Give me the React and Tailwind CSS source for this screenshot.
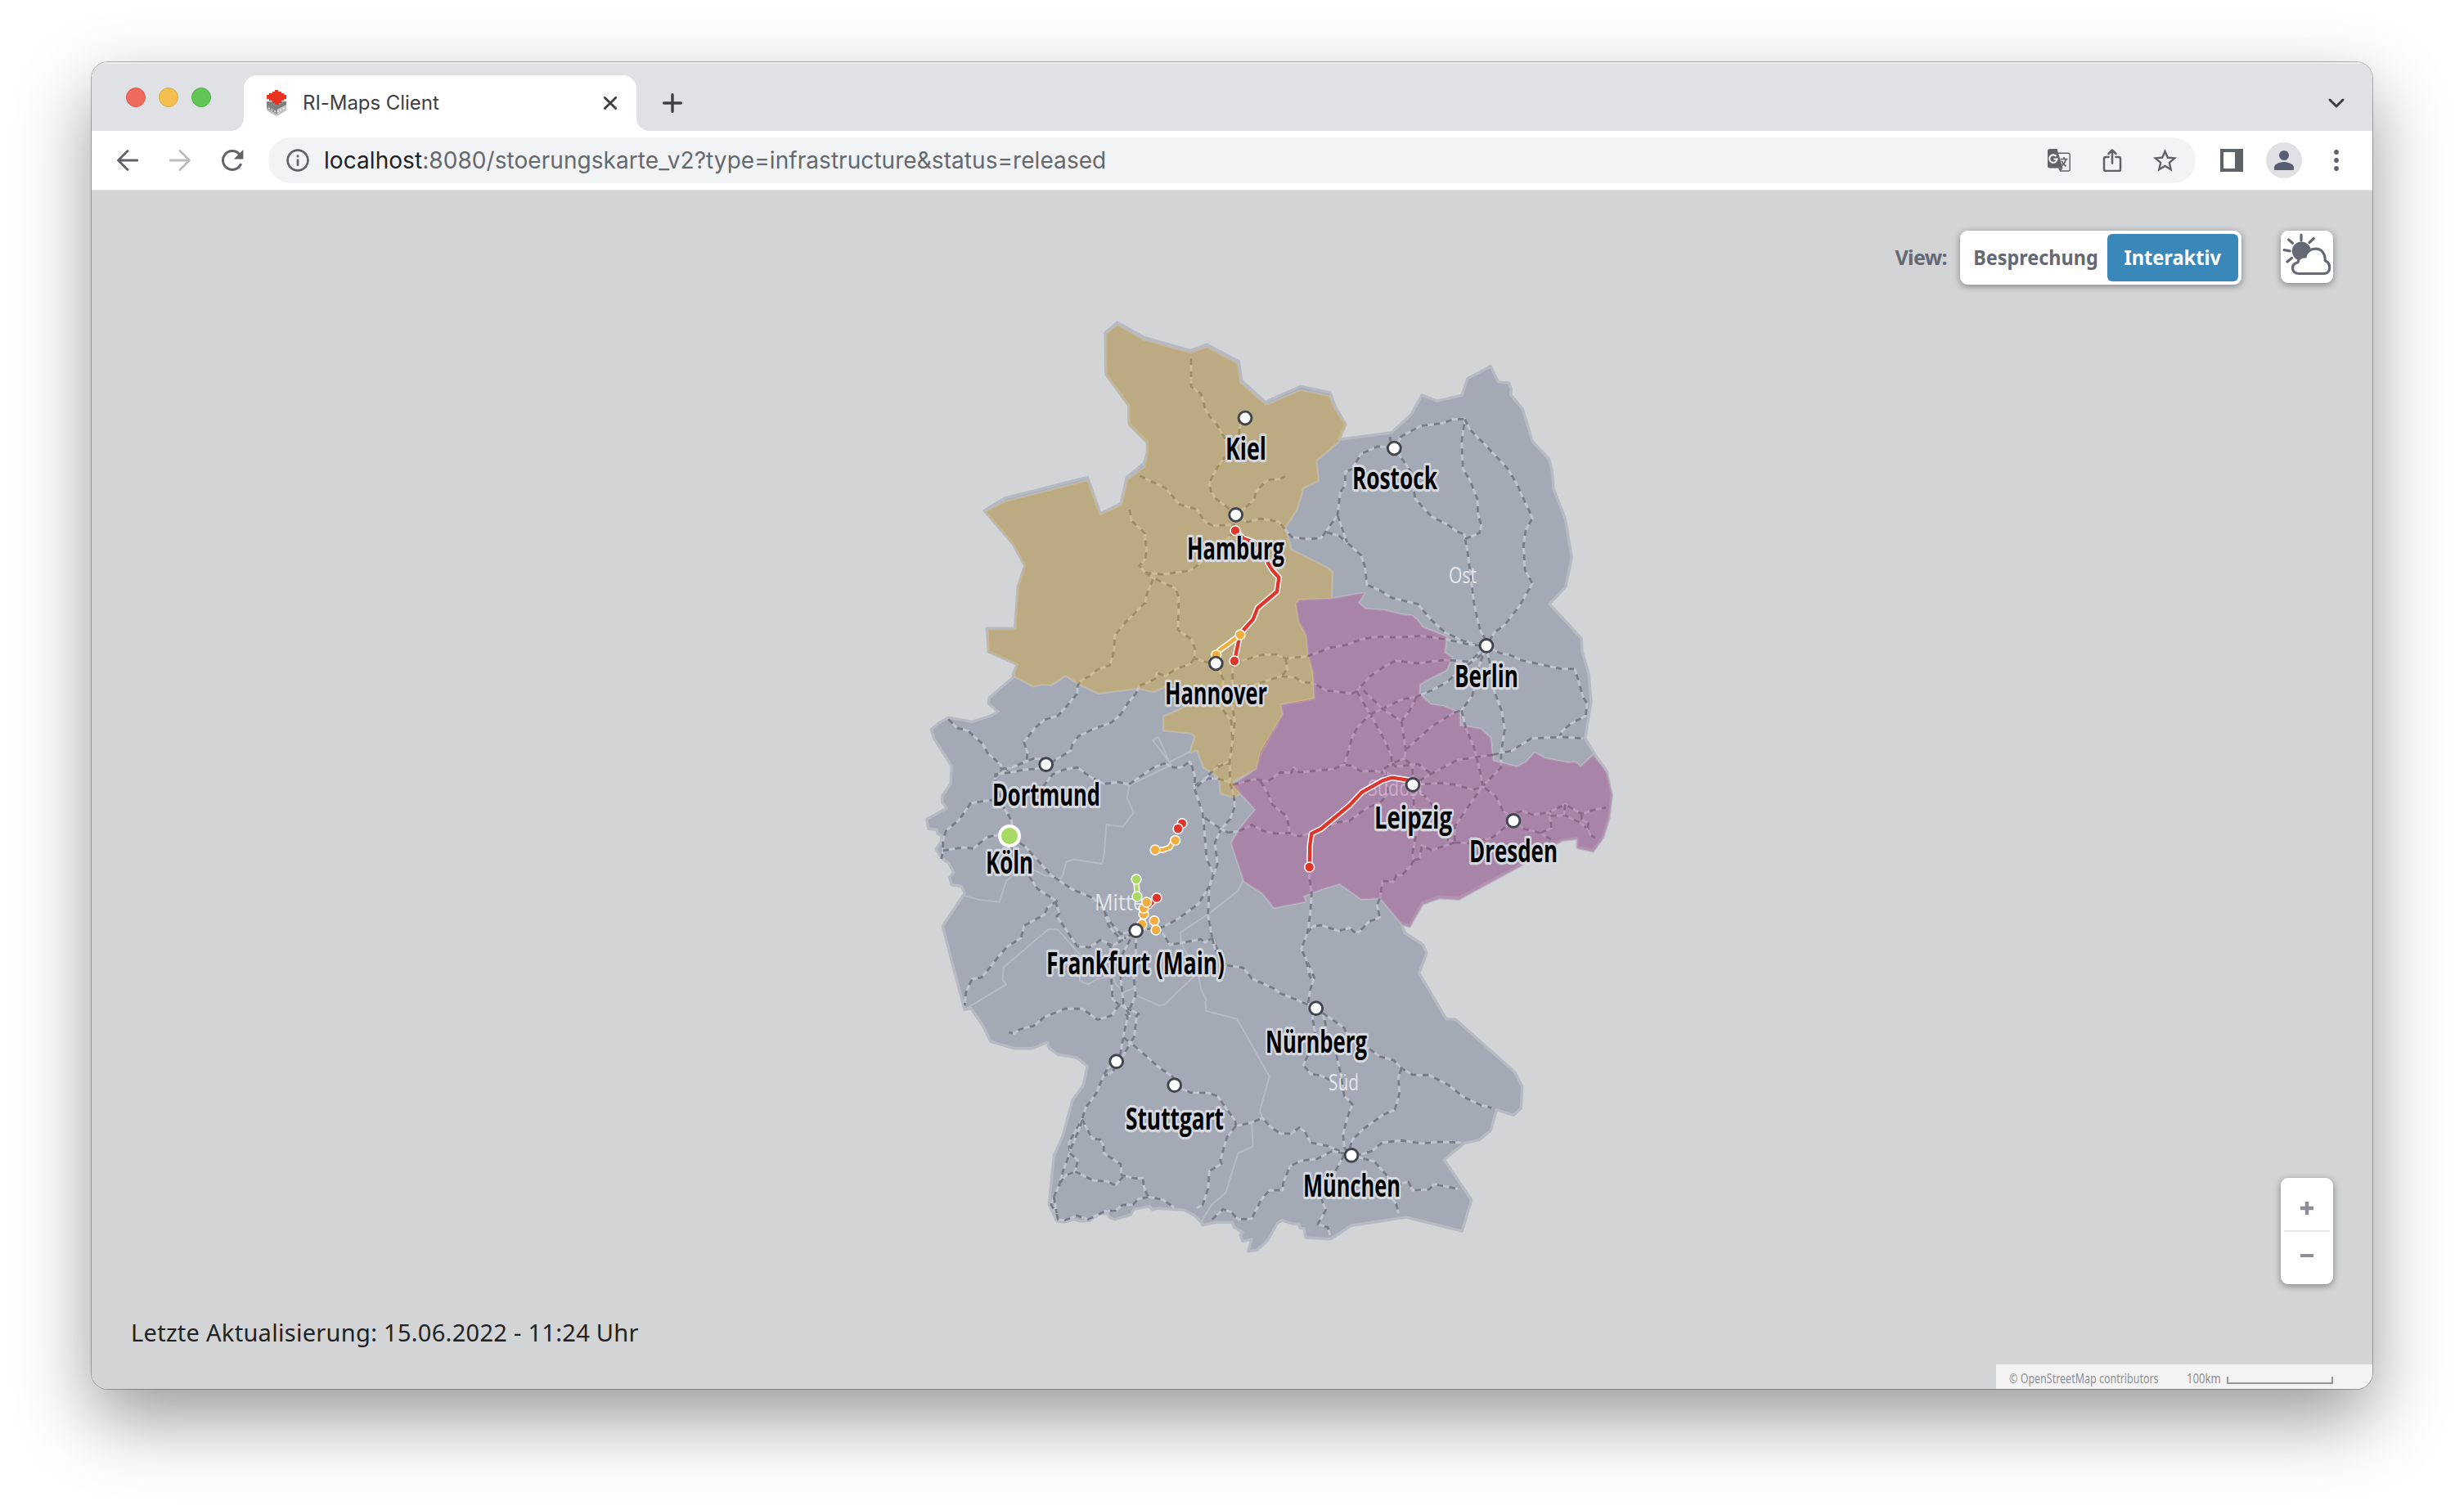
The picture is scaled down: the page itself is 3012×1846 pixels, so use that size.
const TILES = {
  A: [1120, 380],
  B: [1550, 430],
  C: [1120, 820],
  D: [1500, 850],
  E: [1140, 1200],
  F: [1500, 1200],
};

// Geometry is stored per map tile, three units to a pixel: "A 10,20 30,40 B 50,60".
function project(spec) {
  let tile = TILES.A;
  const points = [];
  for (const token of spec.trim().split(/\s+/)) {
    if (TILES[token]) {
      tile = TILES[token];
    } else {
      const [x, y] = token.split(",").map(Number);
      points.push([tile[0] + x / 3, tile[1] + y / 3]);
    }
  }
  return points;
}

const toPoints = (spec) =>
  project(spec)
    .map(([x, y]) => `${x.toFixed(1)},${y.toFixed(1)}`)
    .join(" ");

const GERMANY = `A 737,43 835,97 1006,146 1065,123 1183,185 1193,256 1283,337
B 0,180 120,127 228,150 249,206 284,265 260,322 452,297 524,232 565,158 618,181 711,160 732,98 817,53 844,111 883,114 892,135 890,158 934,210 970,330 1030,393 1042,437 1047,503 1090,612 1114,755 1091,862 1032,925 1150,1052 1152,1100 1176,1180 1185,1284 1163,1417
D 1346,213 1393,280 1410,365 1400,450 1378,520 1341,569 1284,556 1284,525 1230,530 1190,552 1080,620 850,743 780,738 716,760 668,845 641,838 650,870 718,915 732,945 704,1019 803,1187 838,1189
F 1056,333 1082,385 1078,464 1051,490 988,470 967,545 926,580 870,593 796,653 896,801 862,915 657,864 455,895 380,944 288,939 282,905 266,903 264,889 237,888 201,875 185,885 150,947 110,985 77,989 90,945 57,953 48,930 57,920 25,900 19,883
E 1040,883 990,893 985,882 960,857 922,838 830,832 803,836 797,823 738,835 727,855 668,872 650,865 640,850 610,853 575,877 540,879 520,872 480,882 455,878 427,817 445,640 478,565 513,435 553,380 567,310 527,278 460,268 428,245 421,222 366,245 300,245 213,220 185,163 140,97 117,103
C 97,937 178,815 165,790 130,785 122,758 138,740 120,707 92,685 72,655 92,625 92,605 78,597 75,583 45,580 38,545 112,504 95,482 95,460 126,415 130,350 65,248 55,215 85,190 120,172 205,187 275,165 300,150 265,120 268,98 357,23
A 355,1333 370,1297 265,1250 259,1165 362,1165 373,1010 398,935 355,855 250,733 325,687 628,610 675,743 750,707 772,610 835,560 847,520 847,480 780,412 780,348 695,232 693,80`;

const NORD = `A 737,50 835,106 1006,154 1065,132 1178,192 1188,262 1281,343
B 0,192 120,140 224,162 245,210 286,267 258,332 177,400 186,473 130,500 107,578 63,645 85,725 215,790 237,808 233,905 115,910 103,925 113,990 140,1040 147,1110 165,1175 170,1272 130,1284 50,1292 53,1332 5,1420
C 1265,303 1248,360 1163,405 1190,450 1165,465 1115,450 1112,405 1095,380 1053,355 1030,292 1003,300 1022,243 1010,230 907,220 907,168 985,132 960,50 925,55 870,78 815,65 668,83 600,52 548,18 495,53 460,50 430,58 357,20
A 370,1297 265,1250 262,1167 362,1167 373,1010 398,935 355,855 252,737 325,699 628,622 675,747 752,712 775,618 838,572 847,520 847,485 780,418 780,350 697,235 697,84`;

const SUEDOST = `B 115,910 233,905 325,888 355,885 333,920 357,942 430,948 488,963 528,967 548,983 568,1010 655,1045 648,1103 675,1120 655,1168 590,1200 557,1220 555,1255 597,1293 645,1300 703,1325 705,1370 780,1383 810,1410
D 967,157 975,240 1063,262 1095,245 1128,210 1165,230 1250,247 1280,245 1296,262 1343,218 1393,284 1412,365 1402,450 1380,522 1343,574 1284,561 1284,527 1230,533 1190,556 1080,624 850,749 780,745 718,766 670,850 641,840 562,745 492,748 413,692 350,710 280,737 290,757 172,780 130,727 62,683 15,542 45,490 103,420 20,328 108,270 123,205 205,70 197,35 320,12
B 165,1175 147,1110 140,1040 113,990 103,925`;

const BORDERS = [
  "C 178,825 230,840 305,848 330,770 365,745 430,730 470,750 530,763 540,745 550,700 580,692 682,708 690,665 697,565 758,572 797,520 773,465 782,420 935,345 868,255 888,243 928,335 1003,297",
  "C 177,1243 330,1150 317,1135 320,1088 485,947 520,950 600,1040 600,1138 630,1150 665,1130 720,1120 733,1150 760,1180 805,1162",
  "C 805,1190 890,1227 910,1225 1030,1110",
  "C 1198,770 1180,808 1070,893 968,960 972,1000 1035,1115 1045,1170 1065,1210 1060,1215 1063,1248 1178,1277 E 1117,137 1235,348 1200,475 1210,500",
  "E 1170,515 1175,605 1120,630 1075,775 1022,820 985,882",
];

const RAILS = [
  "A 1012,180 1008,180 1008,278 1045,305 1060,360 1085,400 1098,410 1130,465 1150,520 1125,545 1100,580 1075,630 1080,660 1100,690 1172,745",
  "A 1206,393 1188,420 1183,455 1150,520",
  "A 820,605 915,650 965,710 1030,728 1055,770 1085,787 1170,785",
  "A 782,728 790,770 838,815 845,880 840,910 818,935 840,960 870,980 950,1018 963,1050 960,1170 1010,1205 1022,1240 1020,1275 1070,1290 1099,1293",
  "A 840,960 900,967 1005,953 1060,910 1110,860 1150,830 1172,790",
  "A 868,985 845,1040 840,1070 770,1140 728,1190 725,1250 710,1300 665,1315 635,1340 605,1355 592,1375 590,1405 560,1440 C 520,165 470,180 435,210 395,262 408,300 405,330 345,357",
  "A 1020,1275 1005,1295 950,1315 912,1340 883,1327 875,1350 845,1365 818,1375 805,1405 775,1440 C 750,160 715,190 640,218 595,240 573,270 565,295 505,330 476,344",
  "A 1172,748 1215,775 1260,762 1330,773 B 65,655 88,680 150,687 195,683 255,600 265,515 283,490 283,440 310,430 340,375 403,347 463,354",
  "A 1172,748 1215,715 1240,690 1245,665 1275,632 B 0,470 45,467 63,457",
  "B 215,662 260,675 290,700 340,745 355,785 363,855 410,875 455,903 548,925 600,985 650,1030 720,1062 775,1078 801,1078",
  "B 255,600 290,700",
  "B 463,354 500,405 525,440 540,540 600,605 660,635 690,658 720,670 733,740 748,860 755,920 770,990 780,1025 801,1060",
  "B 447,312 450,330",
  "B 463,354 490,310 560,272 640,262 680,248 722,247 710,330 715,430 740,470 768,540 770,595 783,640 775,665 722,687",
  "B 722,247 740,285 800,345 880,430 910,480 970,610 945,655 937,710 942,800 970,850 920,935 870,1000 830,1030 801,1078",
  "B 801,1078 850,1105 890,1113 930,1132 1075,1163 1125,1163 1135,1195 1155,1265 1170,1290 1165,1335 1110,1365 1080,1390 1070,1410",
  "D 975,218 1045,203 1115,158 1230,153 1305,158",
  "A 1170,1290 1265,1262 1315,1260 B 25,1110 65,1125 145,1117 230,1085 290,1075 340,1055 400,1045 470,1048 560,1042 655,1055 720,1070 775,1078",
  "B 65,1125 70,1165 50,1190 0,1205 A 1240,1372 1165,1378",
  "B 50,1190 100,1195 125,1212 165,1215 215,1243 310,1253 325,1245 375,1190 425,1155 468,1133 545,1143 650,1130 740,1137 801,1078",
  "B 325,1245 375,1330 D 570,150 600,215 605,250",
  "B 350,1242 420,1310 490,1355 D 650,170 655,200 650,235",
  "B 785,1110 730,1150 650,1215 600,1242 545,1265 490,1275 430,1305 375,1330 330,1375 310,1410 D 440,220 430,255",
  "B 545,1265 520,1315 490,1355",
  "D 655,200 750,115 830,65 860,55 B 750,1260 775,1150 801,1078",
  "B 801,1078 820,1180 830,1245 858,1320 868,1385 D 1005,210 1005,265 935,335 890,400 835,480 835,535",
  "D 860,55 875,120 905,190 930,290 938,335",
  "D 975,218 845,237 745,290 681,328",
  "D 681,328 780,322 840,328 900,347 938,335 985,370 1010,420 1050,460",
  "D 20,328 100,308 150,315 195,283 235,285 245,265 265,283 390,270 430,255 455,258 490,278 545,278 600,290",
  "D 122,315 150,360 165,400 220,445 228,500",
  "D 0,503 40,500 90,475 140,500 180,507 228,505 265,517 320,500",
  "D 320,505 410,465 450,460 510,415 560,395 590,360 575,270 605,250 650,232 680,260 681,328",
  "D 605,250 620,262 700,252 745,285",
  "D 681,328 740,385 775,440 810,530 835,540 750,568 715,550 705,600 685,605 680,580 695,500 685,400 681,328",
  "D 685,605 670,630 640,660 620,660 610,685 570,680 562,740 550,770 560,815 520,830 485,868 465,868 450,852 410,865 345,843 315,848 295,870",
  "D 835,540 900,543 975,520 1050,460",
  "D 1050,460 1090,490 1150,505 1190,530",
  "D 1150,505 1190,487 1180,430 1240,400 1300,435 1345,420 1390,412",
  "D 1060,430 1085,425 1120,438 1180,430 1190,442 1240,440 1290,465 1325,490 1330,510 1350,523",
  "D 1240,400 1235,440",
  "D 1300,435 1300,455 1325,470 1320,495",
  "D 302,630 302,670 310,730 305,800 295,870 272,930 300,990 320,1035 305,1080 297,1130 326,1147",
  "D 290,975 305,1035 318,1045",
  "C 118,178 150,210 190,220 245,270 260,300 310,345 312,378",
  "C 290,385 345,357 430,322 476,325",
  "C 476,344 440,360 400,362 350,372 290,380 290,400",
  "C 310,360 350,357",
  "C 290,400 300,440 320,500 350,550 352,590",
  "C 290,475 275,475 200,485 155,550 110,585 98,620 98,660 92,690",
  "C 98,660 170,648 210,652 260,610 342,595",
  "C 342,606 400,645 450,700 495,750 570,800 650,835 690,880 710,920 750,965 806,953",
  "C 342,640 415,755 445,800 515,845 480,870 470,895 395,935 385,980 335,1010 300,1050 265,1095 240,1125 205,1130 182,1180 178,1228",
  "C 510,845 525,890 515,900 550,950 590,1010 635,1015 675,988 720,1008 770,980 806,953",
  "C 690,880 705,935 745,980 770,980",
  "C 465,425 500,380 540,363 590,355 640,390 690,415 740,408 780,417 870,355 910,340 945,355 970,355 1005,333 1022,385 1020,430 1050,520 1058,600 1065,690 1090,745 1075,790 1070,895 1085,980 1135,1080",
  "C 1022,420 1070,395 1095,395 1120,400 1155,410",
  "C 1030,425 1070,385 1110,345 1150,340",
  "C 1099,-27 1125,30 1125,70 1115,130 1155,185 1160,270 1150,330 1095,360 1060,395",
  "C 1160,-35 1160,130 1168,190 1150,330 1150,410 1165,455 1168,500 1150,545 1118,580 1095,630 1105,710 1075,790 1035,855 960,910 905,940 806,953",
  "C 1058,540 1110,575 1145,595",
  "C 880,951 905,965 930,1005 1015,990 1045,985 1060,997 1085,980 1110,1040",
  "C 1085,980 1095,1020 1135,1080",
  "D 0,990 60,1000 90,1038 170,1075 195,1093 250,1115 326,1147",
  "C 806,953 805,1040 795,1100 805,1190 785,1235 770,1260 E 715,130 700,200 690,260 674,293",
  "C 700,1000 712,1010 715,1120 720,1205 745,1225 815,1258 E 748,125 740,200 700,270 674,293",
  "C 785,985 750,1050 750,1130 760,1220 785,1270",
  "C 745,1225 715,1265 665,1280 610,1240 545,1240 470,1270 430,1303 E 350,167 320,175 300,190 280,187",
  "E 700,205 735,232 780,270 830,315 880,348 887,380 945,407 1010,408 1045,420 1080,470 1110,510 1112,530 1175,515 1210,500 F 155,530 195,557 235,558 265,535 285,550 305,590 370,603 410,620 456,637",
  "E 1112,530 1080,570 1055,655 1060,668 1015,695 1010,760 990,820 968,830",
  "E 674,293 640,320 625,350 600,410 560,465 548,505 500,590 503,630 480,690 465,745 440,800 435,820 455,850 460,873 485,875 530,858 570,872 630,843 670,840 695,820 735,818 755,797 793,790 845,800 885,828",
  "E 674,310 655,335 630,345",
  "E 445,790 455,850",
  "E 548,505 585,575 615,580 628,605 628,630 690,670 693,710 745,722 770,720 778,765 793,790",
  "E 503,630 533,655 523,697 490,710 465,740",
  "E 523,697 590,730 640,733 670,747 700,715",
  "E 548,510 530,560 503,620",
  "E 1025,873 1065,835 1095,845 1120,872 1170,870 1205,800 1235,765 1285,765 F 205,740 230,678 270,657 330,650 385,622 430,630",
  "F 326,98 313,130 322,185 297,270 280,305 305,338 345,345 400,372",
  "F 345,98 360,150 365,190 400,265 415,330 430,420 460,450 440,500 425,560 430,610 456,637",
  "F 350,115 430,170 450,215 520,245 560,275 610,288 640,318 680,342 740,343 810,378 865,422 930,453 970,463",
  "F 640,318 628,350 632,410 615,470 570,490 500,540 460,580 450,610",
  "F 470,640 530,622 570,590 640,583 715,594 770,588 860,590",
  "F 456,637 540,660 585,710 605,750 600,790 620,815 628,850",
  "F 620,750 640,740 665,735 680,765 740,763 760,743 845,760",
  "F 430,635 400,690 385,740 345,795 362,838 332,890 370,902 377,930",
];

const RED = "#e0352b";
const ORANGE = "#f3ad3e";
const GREEN = "#a6da62";

const INCIDENTS = [
  { color: RED, path: "A 1170,806 1200,835 1240,850 1280,890 1290,925 1305,950 1330,978 1323,1030 1252,1090 1235,1132 1188,1184 1167,1284", stops: "A 1170,806 1167,1284" },
  { color: ORANGE, path: "A 1188,1188 1150,1217 1112,1245 1100,1262", stops: "A 1100,1262 1188,1188" },
  { color: RED, path: "D 668,312 605,302 570,313 495,355 450,403 345,490 310,507 304,550 302,630", stops: "D 302,630" },
  { color: RED, path: "C 975,560 960,579", stops: "C 975,560 960,579" },
  { color: ORANGE, path: "C 876,657 905,657 930,648 940,630 950,622", stops: "C 876,657 950,622" },
  { color: GREEN, path: "C 807,765 810,828", stops: "C 807,765 810,828" },
  { color: RED, path: "C 882,833 850,868", stops: "C 882,833" },
  { color: ORANGE, path: "C 845,849 834,893 828,930 806,935", stops: "C 828,930 834,893 834,871 845,849" },
  { color: ORANGE, path: "C 873,917 879,951", stops: "C 873,917 879,951" },
];

const STATIONS = "A 1206,393 1172,748 1099,1293 B 463,354 801,1078 C 476,344 806,953 D 681,328 1050,460 F 326,98 456,637 E 674,293 887,380";

// name, left, right, baseline
const CITIES = [
  ["Kiel", 1498, 1548, 561.5],
  ["Hamburg", 1451, 1570, 683.5],
  ["Hannover", 1424, 1549, 861],
  ["Rostock", 1653, 1757, 598],
  ["Berlin", 1778, 1856, 840],
  ["Dortmund", 1213, 1345, 985],
  ["Köln", 1205, 1263, 1067.5],
  ["Frankfurt (Main)", 1279, 1497, 1190.5],
  ["Leipzig", 1680, 1775, 1013],
  ["Dresden", 1796, 1904, 1053.5],
  ["Nürnberg", 1547, 1671, 1286.5],
  ["Stuttgart", 1376, 1496, 1380.5],
  ["München", 1593, 1712, 1463],
];

const REGIONS = [
  ["Ost", 1771, 1805, 713, "#e3e6eb"],
  ["Mitte", 1338, 1399, 1113, "#e3e6eb"],
  ["Südost", 1672, 1741, 973, "#cfabcb"],
  ["Süd", 1624, 1661, 1333, "#e3e6eb"],
];

function GermanyMap() {
  return (
    <svg viewBox="1120 380 880 1180" className="block h-[1180px] w-[880px]" strokeLinejoin="round">
      <polygon points={toPoints(GERMANY)} fill="#a3aab5" stroke="#b6bac2" strokeWidth="3.4" />
      <g fill="none" stroke="#b6bac3" strokeWidth="2.6">
        <polygon points={toPoints(NORD)} />
        <polygon points={toPoints(SUEDOST)} />
        {BORDERS.map((b) => (
          <polyline key={b} points={toPoints(b)} strokeWidth="2" />
        ))}
      </g>
      <g fill="none" strokeWidth="2.9">
        {RAILS.map((r) => (
          <g key={r}>
            <polyline points={toPoints(r)} stroke="#bfc4d0" />
            <polyline points={toPoints(r)} stroke="#777c87" strokeDasharray="7.4 7.6" />
          </g>
        ))}
      </g>
      <polygon points={toPoints(NORD)} fill="#eaad23" fillOpacity="0.35" />
      <polygon points={toPoints(SUEDOST)} fill="#b14390" fillOpacity="0.35" />

      <g fontFamily="'Open Sans', 'Noto Sans', sans-serif" fontSize="28">
        {REGIONS.map(([name, x1, x2, y, fill]) => (
          <text key={name} x={x1} y={y} fill={fill} textLength={x2 - x1} lengthAdjust="spacingAndGlyphs">
            {name}
          </text>
        ))}
      </g>

      {INCIDENTS.map((i) => (
        <g key={i.path} fill="none">
          <polyline points={toPoints(i.path)} stroke="#fff" strokeWidth="7.4" />
          <polyline points={toPoints(i.path)} stroke={i.color} strokeWidth="4.4" />
        </g>
      ))}
      {INCIDENTS.map((i) =>
        project(i.stops).map(([x, y]) => (
          <circle key={`${x}-${y}`} cx={x} cy={y} r="5.9" fill={i.color} stroke="#fff" strokeWidth="1.5" />
        ))
      )}
      <circle cx="1234" cy="1022" r="12" fill={GREEN} stroke="#fff" strokeWidth="4" />
      {project(STATIONS).map(([x, y]) => (
        <circle key={`${x}-${y}`} cx={x} cy={y} r="7.9" fill="#fff" stroke="#3f444d" strokeWidth="2.9" />
      ))}

      <g fontFamily="'Open Sans', 'Noto Sans', sans-serif" fontSize="37" fontWeight="700">
        {CITIES.map(([name, x1, x2, y]) => (
          <text
            key={name}
            x={x1}
            y={y}
            textLength={x2 - x1}
            lengthAdjust="spacingAndGlyphs"
            fill="#000"
            stroke="#d6d9df"
            strokeWidth="6.5"
            paintOrder="stroke"
          >
            {name}
          </text>
        ))}
      </g>
    </svg>
  );
}

function Favicon() {
  return (
    <svg viewBox="0 0 24 32" className="h-8 w-6">
      <path d="M0 20l12 8 12-8v5l-12 7-12-7z" fill="#bdbdbd" />
      <path d="M0 14h24v8l-12 7L0 22z" fill="#8a8a8a" />
      <path d="M13 22l11-5v7l-11 6z" fill="#c4c4c4" />
      <path d="M2 22l10 5 10-5" fill="none" stroke="#fff" strokeWidth="1.2" strokeDasharray="2 2" />
      <path d="M0 14l12 6 12-6v4l-12 6-12-6z" fill="#7d7d7d" />
      <path d="M7 2h3V0h4v2h4v2h3v2h3v5h-3v2h-3v3h-3v2h-5v-2H7v-3H3v-2H0V6h3V4h4z" fill="#ea3323" />
    </svg>
  );
}

function TabStrip() {
  return (
    <div className="flex h-[84px] bg-[#dfe1e5] shadow-[inset_0_2px_0_#eceef1]">
      <div className="flex w-[186px] items-start gap-4 pl-[42px] pt-[31px]">
        <span className="size-6 rounded-full border border-[#dd594f] bg-[#ee6a5f]" />
        <span className="size-6 rounded-full border border-[#dea73e] bg-[#f5bf4f]" />
        <span className="size-6 rounded-full border border-[#52ad42] bg-[#61c554]" />
      </div>
      <div className="relative mt-4 flex h-[68px] w-[480px] items-center rounded-t-[16px] bg-white pl-7 pr-6">
        <svg viewBox="0 0 16 16" className="absolute -left-4 bottom-0 size-4" fill="#fff">
          <path d="M16 0v16H0A16 16 0 0 0 16 0z" />
        </svg>
        <svg viewBox="0 0 16 16" className="absolute -right-4 bottom-0 size-4" fill="#fff">
          <path d="M0 0v16h16A16 16 0 0 1 0 0z" />
        </svg>
        <Favicon />
        <span className="ml-5 flex-1 whitespace-nowrap font-['Inter',sans-serif] text-[24px] tracking-[-0.05px] text-[#3c4043]">
          RI-Maps Client
        </span>
        <svg viewBox="0 0 16 16" className="size-4" stroke="#3c4043" strokeWidth="2.8" strokeLinecap="round">
          <path d="M1.4 1.4l13.2 13.2M14.6 1.4L1.4 14.6" />
        </svg>
      </div>
      <svg viewBox="0 0 24 24" className="ml-8 mt-[38px] size-6" stroke="#3c4043" strokeWidth="3.4" strokeLinecap="round">
        <path d="M12 1.7v20.6M1.7 12h20.6" />
      </svg>
      <svg viewBox="0 0 20 12" className="ml-auto mr-[34px] mt-[44px] h-3 w-5" fill="none" stroke="#3c4043" strokeWidth="3" strokeLinecap="round" strokeLinejoin="round">
        <path d="M2 2l8 8 8-8" />
      </svg>
    </div>
  );
}

function Toolbar() {
  return (
    <div className="flex h-[74px] items-center border-b-2 border-[#d8dadd] bg-white font-['Inter',sans-serif]">
      <div className="flex w-[216px] items-center gap-[38px] pl-[31px]">
        <svg viewBox="0 0 26 26" className="size-[26px]" fill="none" stroke="#5f6368" strokeWidth="2.8" strokeLinecap="round" strokeLinejoin="round">
          <path d="M25 13H2M13 1.5L1.5 13 13 24.5" />
        </svg>
        <svg viewBox="0 0 26 26" className="size-[26px]" fill="none" stroke="#babcbe" strokeWidth="2.8" strokeLinecap="round" strokeLinejoin="round">
          <path d="M1 13h23M13 1.5L24.5 13 13 24.5" />
        </svg>
        <svg viewBox="0 0 28 26" className="-ml-px h-[26px] w-7" fill="none">
          <path d="M22.5 5.5A11.4 11.4 0 1 0 24.6 17" stroke="#5f6368" strokeWidth="3" />
          <path d="M27.4 0v11.6H15.8z" fill="#5f6368" />
        </svg>
      </div>
      <div className="flex h-14 w-[2356px] items-center rounded-full bg-[#f1f3f5] pl-[23px] pr-[22px]">
        <svg viewBox="0 0 28 28" className="-ml-px size-7" fill="none" stroke="#5f6368">
          <circle cx="14" cy="14" r="12.4" strokeWidth="2.6" />
          <path d="M14 12.4v8.4M14 7.4v2.8" strokeWidth="2.7" />
        </svg>
        <div className="ml-[18px] flex-1 whitespace-nowrap text-[28px] tracking-[0.06px] text-[#65696e]">
          <span className="text-[#202124]">localhost</span>:8080/stoerungskarte_v2?type=infrastructure&amp;status=released
        </div>
        <div className="flex items-center gap-[37px]">
          <svg viewBox="0 0 28 28" className="size-7">
            <path d="M12 5.3h13.500A1.800 1.800 0 0 1 27.200 7v18.200a1.800 1.800 0 0 1-1.700 1.900H16" fill="none" stroke="#5f6368" strokeWidth="1.500" />
            <path d="M2.500 0H11.500L18.500 23.500H2.500A2.500 2.500 0 0 1 0 21V2.500A2.500 2.500 0 0 1 2.500 0z" fill="#5f6368" />
            <path d="M13 23.500h5.500L15.500 28z" fill="#5f6368" />
            <path d="M10.500 9A4.700 4.700 0 1 0 11.600 12.500H7.500" fill="none" stroke="#fff" strokeWidth="2.100" />
            <path d="M15.500 12.500h9M20 10v2.500M22.500 12.500C21.500 17 19.500 19 17.500 20.500M17 14.500c1.500 3.500 3.500 5.500 5.500 7" fill="none" stroke="#5f6368" strokeWidth="1.700" />
          </svg>
          <svg viewBox="0 0 24 28" className="ml-0.5 h-7 w-6" fill="none" stroke="#5f6368" strokeWidth="2.500" strokeLinecap="round" strokeLinejoin="round">
            <path d="M7.500 10H4A2 2 0 0 0 2 12v13a2 2 0 0 0 2 2h16a2 2 0 0 0 2-2V12A2 2 0 0 0 20 10h-3.500M12 17.500V2M7.500 6L12 1.500 16.500 6" />
          </svg>
          <svg viewBox="0 0 24 24" className="-mx-0.5 size-[35px]" fill="#5f6368">
            <path d="M22 9.240l-7.190-.62L12 2 9.190 8.630 2 9.240l5.460 4.730L5.820 21 12 17.270 18.180 21l-1.630-7.030L22 9.240zM12 15.400l-3.760 2.270 1-4.280-3.320-2.880 4.380-.38L12 6.100l1.710 4.040 4.380.38-3.320 2.880 1 4.280L12 15.400z" />
          </svg>
        </div>
      </div>
      <svg viewBox="0 0 28 28" className="ml-[30px] size-7">
        <path d="M0 0h28v28H0zM4 4v20h14V4z" fill="#5f6368" fillRule="evenodd" />
      </svg>
      <span className="ml-7 flex size-11 items-center justify-center rounded-full bg-[#dfe1e5]">
        <svg viewBox="0 0 24 24" className="size-6" fill="#585f70">
          <circle cx="12" cy="6" r="6" />
          <path d="M0 24v-3.500C0 16 8 14 12 14s12 2 12 6.500V24z" />
        </svg>
      </span>
      <svg viewBox="0 0 6 26" className="ml-[39px] h-[26px] w-1.5" fill="#5f6368">
        <circle cx="3" cy="3" r="2.900" />
        <circle cx="3" cy="13" r="2.900" />
        <circle cx="3" cy="23" r="2.900" />
      </svg>
    </div>
  );
}

function WeatherIcon() {
  return (
    <svg viewBox="0 0 64 64" className="size-16" fill="none" stroke="#646973">
      <path d="M25 5v7M9.600 11l4.900 4.200M40.300 9.500l-5.300 5M4.200 23.600l7 1.200M8 38l5.500-4.500" strokeWidth="3.200" strokeLinecap="round" />
      <circle cx="25.300" cy="25" r="11.500" fill="#646973" stroke="none" />
      <path d="M22 52.500h30.500c4.500 0 7.200-3.200 7.200-7.500 0-4.300-2-7-5.500-8.500C54.500 27.500 49.500 22.200 42.500 22.200c-6 0-11 3.800-12.500 9.800-5.500-.5-9 3-9 6.800-4 1-6.500 3.200-6.500 6.700 0 4.500 3 7 7.500 7z" fill="#fff" strokeWidth="3.200" strokeLinejoin="round" />
    </svg>
  );
}

export default function App() {
  return (
    <div className="h-[1846px] w-[3012px] overflow-hidden bg-white pl-[112px] pt-[76px]">
      <div className="flex h-[1622px] w-[2788px] flex-col rounded-[20px] shadow-[0_0_0_1px_rgba(0,0,0,0.28),0_36px_90px_rgba(0,0,0,0.4)]">
        <div className="flex h-full flex-col overflow-hidden rounded-[20px]">
          <TabStrip />
          <Toolbar />
          <div className="flex flex-1 bg-[#d3d4d6] font-['Noto_Sans',sans-serif]">
            <div className="flex w-[1008px] flex-col justify-end pb-[49px] pl-[48px]">
              <div className="whitespace-nowrap text-[29px] leading-[40px] tracking-[0.29px] text-[#222]">
                Letzte Aktualisierung: 15.06.2022 - 11:24 Uhr
              </div>
            </div>
            <div className="w-[880px] pt-[146px]">
              <GermanyMap />
            </div>
            <div className="flex flex-1 flex-col items-end pt-12">
              <div className="flex items-center pr-12 text-[25px] font-bold text-[#646973]">
                <span className="mr-4 tracking-[-0.6px]">View:</span>
                <div className="flex h-[66px] w-[344px] rounded-[9px] bg-white p-1 shadow-[0_2px_8px_rgba(0,0,0,0.4)]">
                  <span className="flex w-[176px] items-center justify-center">
                    <span className="scale-x-[0.935]">Besprechung</span>
                  </span>
                  <span className="flex w-40 items-center justify-center rounded-md bg-[#3a87ba] text-white">
                    <span className="scale-x-[0.945]">Interaktiv</span>
                  </span>
                </div>
                <span className="-mt-0.5 ml-12 size-16 rounded-[9px] bg-white shadow-[0_2px_8px_rgba(0,0,0,0.4)]">
                  <WeatherIcon />
                </span>
              </div>
              <div className="mr-12 mt-auto flex h-[130px] w-16 flex-col items-center rounded-[9px] bg-white px-1 shadow-[0_2px_8px_rgba(0,0,0,0.4)]">
                <span className="flex h-16 w-full items-center justify-center pt-2.5">
                  <svg viewBox="0 0 16 16" className="size-4" stroke="#8b8e99" strokeWidth="4.400">
                    <path d="M8 0v16M0 8h16" />
                  </svg>
                </span>
                <span className="h-0.5 w-full bg-[#e6e6e6]" />
                <span className="flex h-[58px] w-full items-center justify-center">
                  <span className="h-1 w-4 bg-[#8b8e99]" />
                </span>
              </div>
              <div className="mt-[98px] flex h-[30px] w-[460px] bg-[#f3f3f3] pl-4 text-[16px] leading-[34px] text-[#8f9097]">
                <span className="w-[217px] whitespace-nowrap">
                  <span className="inline-block origin-left scale-x-[0.78]">© OpenStreetMap contributors</span>
                </span>
                <span className="w-[49px]">
                  <span className="inline-block origin-left scale-x-[0.82]">100km</span>
                </span>
                <span className="mt-[15px] h-[9px] w-[130px] border-x-2 border-b-2 border-[#96979d]" />
              </div>
            </div>
          </div>
        </div>
      </div>
    </div>
  );
}
